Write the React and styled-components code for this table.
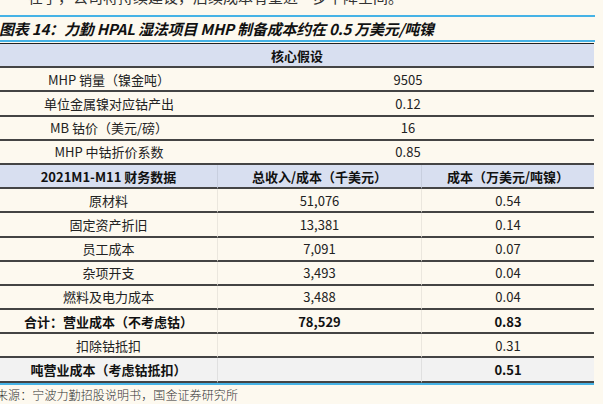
import React from "react";
import styled, { createGlobalStyle, css } from "styled-components";

const GlobalStyle = createGlobalStyle`
  html, body { margin: 0; padding: 0; background: #fdf9ef; }
  body { font-family: "Noto Sans CJK SC", "Noto Sans", sans-serif; color: #1e1e1e; }
`;

const Page = styled.div`
  width: 603px;
  height: 404px;
  overflow: hidden;
  background: #fdf9ef;
  display: flex;
  flex-direction: column;
`;

const Lead = styled.p`
  margin: -13px 0 0 28px;
  height: 19px;
  font-size: 15px;
  line-height: 19px;
  color: #333;
  white-space: nowrap;
`;

const TitleBar = styled.div`
  margin-top: 9px;
  width: 595px;
  border-top: 2px solid #46b3e6;
  border-bottom: 2px solid #46b3e6;
  height: 23px;
  display: flex;
  align-items: center;
`;

const Title = styled.h1`
  margin: 0 0 0 -1px;
  font-size: 15px;
  line-height: 23px;
  font-weight: 700;
  font-style: italic;
  letter-spacing: -0.2px;
  color: #111;
  white-space: nowrap;
`;

const Table = styled.div`
  margin-top: 1px;
  width: 594px;
  border-top: 1px solid #222;
  display: grid;
  grid-template-columns: 218px 204px 172px;
  grid-auto-rows: 24.2px;
  border-bottom: 2px solid #46b3e6;
  box-sizing: content-box;
`;

const Cell = styled.div`
  box-sizing: border-box;
  display: flex;
  align-items: center;
  justify-content: center;
  font-size: 13px;
  white-space: nowrap;
  border-bottom: 2px solid #444;
  background: ${(p) =>
    p.$tone === "head" ? "#d8dff0" : p.$tone === "grey" ? "#f2f2f2" : "#fdf9ef"};
  font-weight: ${(p) => (p.$bold ? 700 : 400)};
  color: ${(p) => (p.$bold ? "#111" : "#222")};
  grid-column: ${(p) => p.$span || "auto"};
  ${(p) =>
    p.$grid &&
    css`
      border-right: 1px solid rgba(0, 0, 0, 0.07);
    `}
  ${(p) =>
    p.$pad &&
    css`
      padding-left: ${p.$pad}px;
    `}
`;

const Source = styled.div`
  margin: 0 0 0 -4px;
  height: 19px;
  font-size: 12px;
  line-height: 19px;
  letter-spacing: 0.1px;
  font-weight: 300;
  color: #333;
  white-space: nowrap;
`;

const assumptions = [
  ["MHP 销量（镍金吨）", "9505"],
  ["单位金属镍对应钴产出", "0.12"],
  ["MB 钴价（美元/磅）", "16"],
  ["MHP 中钴折价系数", "0.85"],
];

const finance = [
  { label: "原材料", total: "51,076", unit: "0.54" },
  { label: "固定资产折旧", total: "13,381", unit: "0.14" },
  { label: "员工成本", total: "7,091", unit: "0.07" },
  { label: "杂项开支", total: "3,493", unit: "0.04" },
  { label: "燃料及电力成本", total: "3,488", unit: "0.04" },
  { label: "合计：营业成本（不考虑钴）", total: "78,529", unit: "0.83", bold: true },
  { label: "扣除钴抵扣", total: "", unit: "0.31" },
  { label: "吨营业成本（考虑钴抵扣）", total: "", unit: "0.51", bold: true, tone: "grey" },
];

export default function App() {
  return (
    <Page>
      <GlobalStyle />
      <Lead>在手，公司将持续建设，后续成本有望进一步下降空间。</Lead>
      <TitleBar>
        <Title>图表 14：力勤 HPAL 湿法项目 MHP 制备成本约在 0.5 万美元/吨镍</Title>
      </TitleBar>
      <Table>
        <Cell $tone="head" $bold $span="1 / 4">
          核心假设
        </Cell>
        {assumptions.map(([label, value]) => (
          <React.Fragment key={label}>
            <Cell>{label}</Cell>
            <Cell $span="2 / 4" $pad={4}>
              {value}
            </Cell>
          </React.Fragment>
        ))}
        <Cell $tone="head" $bold $grid>
          2021M1-M11 财务数据
        </Cell>
        <Cell $tone="head" $bold $grid>
          总收入/成本（千美元）
        </Cell>
        <Cell $tone="head" $bold>
          成本（万美元/吨镍）
        </Cell>
        {finance.map((r) => (
          <React.Fragment key={r.label}>
            <Cell $bold={r.bold} $tone={r.tone} $grid>
              {r.label}
            </Cell>
            <Cell $bold={r.bold} $tone={r.tone} $grid>
              {r.total}
            </Cell>
            <Cell $bold={r.bold} $tone={r.tone}>
              {r.unit}
            </Cell>
          </React.Fragment>
        ))}
      </Table>
      <Source>来源：宁波力勤招股说明书，国金证券研究所</Source>
    </Page>
  );
}
